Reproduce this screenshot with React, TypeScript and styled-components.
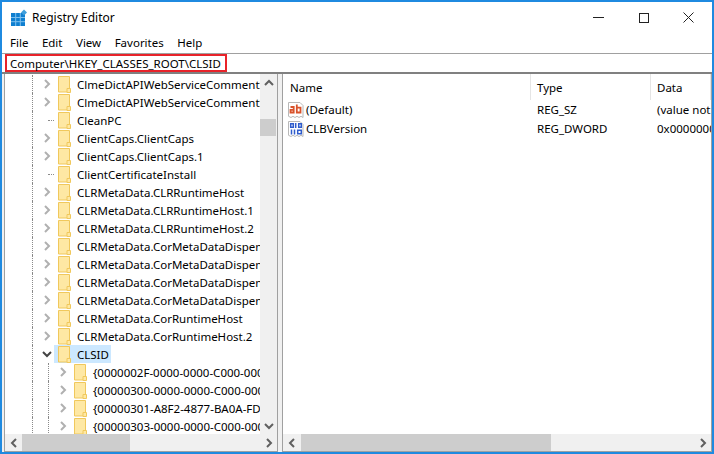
import styled, { createGlobalStyle } from "styled-components";

const GlobalStyle = createGlobalStyle`
	html, body {
		margin: 0;
		padding: 0;
		background: #fff;
	}
`

type TreeItem = { label: string; depth: number; toggle: "closed" | "open" | "none"; selected?: boolean }

const treeItems: TreeItem[] = [
	{ label: "ClmeDictAPIWebServiceCommentService", depth: 0, toggle: "closed" },
	{ label: "ClmeDictAPIWebServiceCommentService", depth: 0, toggle: "closed" },
	{ label: "CleanPC", depth: 0, toggle: "none" },
	{ label: "ClientCaps.ClientCaps", depth: 0, toggle: "closed" },
	{ label: "ClientCaps.ClientCaps.1", depth: 0, toggle: "closed" },
	{ label: "ClientCertificateInstall", depth: 0, toggle: "none" },
	{ label: "CLRMetaData.CLRRuntimeHost", depth: 0, toggle: "closed" },
	{ label: "CLRMetaData.CLRRuntimeHost.1", depth: 0, toggle: "closed" },
	{ label: "CLRMetaData.CLRRuntimeHost.2", depth: 0, toggle: "closed" },
	{ label: "CLRMetaData.CorMetaDataDispenser", depth: 0, toggle: "closed" },
	{ label: "CLRMetaData.CorMetaDataDispenser", depth: 0, toggle: "closed" },
	{ label: "CLRMetaData.CorMetaDataDispenser", depth: 0, toggle: "closed" },
	{ label: "CLRMetaData.CorMetaDataDispenser", depth: 0, toggle: "closed" },
	{ label: "CLRMetaData.CorRuntimeHost", depth: 0, toggle: "closed" },
	{ label: "CLRMetaData.CorRuntimeHost.2", depth: 0, toggle: "closed" },
	{ label: "CLSID", depth: 0, toggle: "open", selected: true },
	{ label: "{0000002F-0000-0000-C000-000000000046}", depth: 1, toggle: "closed" },
	{ label: "{00000300-0000-0000-C000-000000000046}", depth: 1, toggle: "closed" },
	{ label: "{00000301-A8F2-4877-BA0A-FD2B6645FB94}", depth: 1, toggle: "closed" },
	{ label: "{00000303-0000-0000-C000-000000000046}", depth: 1, toggle: "closed" },
]

const AppIcon = () => (
	<svg width="18" height="18" viewBox="0 0 18 18">
		<rect x="1" y="4" width="14" height="13" fill="#0f7fd0" />
		<path d="M1 8.5h14M1 12.7h14M5.7 4v13M10.3 4v13" stroke="#7fc0ee" strokeWidth="1" />
		<path d="M14 0.5l3 3-3 3-3-3z" fill="#3f9fdc" />
	</svg>
)

const Folder = () => (
	<svg width="13" height="17" viewBox="0 0 13 17">
		<path d="M0.5 0.5h11v15.5h-11z" fill="#fee8a4" stroke="#f0c85c" />
		<path d="M9 16.5v-4h3.5v4z" fill="#fee8a4" stroke="#f0c85c" />
	</svg>
)

const Chevron = ({ dir, color = "#b0b0b0" }: { dir: "left" | "right" | "up" | "down"; color?: string }) => {
	const points = {
		right: "3,1 7,5 3,9",
		left: "7,1 3,5 7,9",
		up: "1,7 5,3 9,7",
		down: "1,3 5,7 9,3",
	}[dir]
	return (
		<svg width="10" height="10" viewBox="0 0 10 10">
			<polyline points={points} fill="none" stroke={color} strokeWidth="2" />
		</svg>
	)
}

const Sheet = () => (
	<path d="M0.5 1.5h11.5l3 3v12l-2-1.2-2 1.2-2-1.2-2 1.2-2-1.2-2 1.2-2.5-1.2z" fill="#fff" stroke="#b8b8b8" />
)

const StringIcon = () => (
	<svg width="16" height="18" viewBox="0 0 16 18">
		<Sheet />
		<path d="M2.5 6h3.2v5.5H2.5V8.8h3.2M8.8 3.5v8h3.7V6.6H8.8" fill="none" stroke="#d9532c" strokeWidth="1.8" />
	</svg>
)

const BinaryIcon = () => (
	<svg width="16" height="18" viewBox="0 0 16 18">
		<Sheet />
		<path d="M2.7 3.7h2.6v3.6H2.7zM7.7 3v5M10.7 3.7h2.6v3.6h-2.6zM3.5 9.5v5M6.5 9.5v5M9.7 10.2h3.6v3.6H9.7z" fill="none" stroke="#2f5ccc" strokeWidth="1.5" />
	</svg>
)

const App = () => {
	return (
		<StyledWindow>
			<GlobalStyle />
			<StyledTitleBar>
				<AppIcon />
				<StyledTitle>Registry Editor</StyledTitle>
				<StyledControls>
					<StyledControl>
						<svg width="11" height="11" viewBox="0 0 11 11"><path d="M0 5.5h11" stroke="#222" /></svg>
					</StyledControl>
					<StyledControl>
						<svg width="11" height="11" viewBox="0 0 11 11"><rect x="1.5" y="1.5" width="9" height="9" fill="none" stroke="#222" /></svg>
					</StyledControl>
					<StyledControl>
						<svg width="11" height="11" viewBox="0 0 11 11"><path d="M0.5 0.5l10 10M10.5 0.5l-10 10" stroke="#222" /></svg>
					</StyledControl>
				</StyledControls>
			</StyledTitleBar>

			<StyledMenu>
				<span>File</span>
				<span>Edit</span>
				<span>View</span>
				<span>Favorites</span>
				<span>Help</span>
			</StyledMenu>

			<StyledAddressBar>
				<StyledAddress>Computer\HKEY_CLASSES_ROOT\CLSID</StyledAddress>
			</StyledAddressBar>

			<StyledPanes>
				<StyledTreePane>
					<StyledPaneBody>
						<StyledTree>
							{treeItems.map((item, i) => (
								<StyledRow key={i}>
									<StyledRail $wide={item.depth > 0} />
									{item.depth > 0 && <StyledRail />}
									<StyledToggle>
										{item.toggle === "closed" && <Chevron dir="right" />}
										{item.toggle === "open" && <Chevron dir="down" color="#444" />}
										{item.toggle === "none" && <StyledLeafDots />}
									</StyledToggle>
									<StyledNode $selected={item.selected}>
										<Folder />
										<StyledNodeLabel>{item.label}</StyledNodeLabel>
									</StyledNode>
								</StyledRow>
							))}
						</StyledTree>
						<StyledVScroll>
							<StyledArrow $vertical><Chevron dir="up" color="#606060" /></StyledArrow>
							<StyledVThumb />
							<StyledArrow $vertical><Chevron dir="down" color="#606060" /></StyledArrow>
						</StyledVScroll>
					</StyledPaneBody>
					<StyledHScroll>
						<StyledArrow><Chevron dir="left" color="#606060" /></StyledArrow>
						<StyledHTrack>
							<StyledHThumb $width={108} />
						</StyledHTrack>
						<StyledArrow><Chevron dir="right" color="#606060" /></StyledArrow>
					</StyledHScroll>
				</StyledTreePane>

				<StyledListPane>
					<StyledPaneBody>
						<StyledList>
							<StyledHeader>
								<StyledHeaderCell $width={248} $first>Name</StyledHeaderCell>
								<StyledHeaderCell $width={120}>Type</StyledHeaderCell>
								<StyledHeaderCell $width={60}>Data</StyledHeaderCell>
							</StyledHeader>
							<StyledListRow>
								<StyledNameCell><StringIcon />(Default)</StyledNameCell>
								<StyledTypeCell>REG_SZ</StyledTypeCell>
								<StyledDataCell>(value not set)</StyledDataCell>
							</StyledListRow>
							<StyledListRow>
								<StyledNameCell><BinaryIcon />CLBVersion</StyledNameCell>
								<StyledTypeCell>REG_DWORD</StyledTypeCell>
								<StyledDataCell>0x00000003 (3)</StyledDataCell>
							</StyledListRow>
						</StyledList>
					</StyledPaneBody>
					<StyledHScroll>
						<StyledArrow><Chevron dir="left" color="#606060" /></StyledArrow>
						<StyledHTrack>
							<StyledHThumb $width={250} $offset={1} />
						</StyledHTrack>
						<StyledArrow><Chevron dir="right" color="#606060" /></StyledArrow>
					</StyledHScroll>
				</StyledListPane>
			</StyledPanes>
		</StyledWindow>
	)
}

const StyledWindow = styled.div`
	box-sizing: border-box;
	width: 714px;
	height: 454px;
	display: flex;
	flex-direction: column;
	overflow: hidden;
	background: #fff;
	border: 2px solid #1f8ae0;
	color: #000;
	font-family: "Noto Sans", "Open Sans", sans-serif;
	font-size: 11.5px;
`

const StyledTitleBar = styled.div`
	height: 31px;
	display: flex;
	align-items: center;
	padding-left: 8px;
	flex-shrink: 0;
`

const StyledTitle = styled.div`
	margin-left: 4px;
	font-size: 12px;
`

const StyledControls = styled.div`
	margin-left: auto;
	display: flex;
	margin-right: 1px;
`

const StyledControl = styled.div`
	width: 45px;
	height: 30px;
	display: flex;
	align-items: center;
	justify-content: center;
`

const StyledMenu = styled.div`
	height: 20px;
	flex-shrink: 0;
	display: flex;
	align-items: center;
	gap: 13.5px;
	padding-left: 8px;
	padding-bottom: 2px;
	box-sizing: border-box;
	font-size: 11.5px;
`

const StyledAddressBar = styled.div`
	box-sizing: border-box;
	height: 21px;
	flex-shrink: 0;
	border-top: 1px solid #a0a0a0;
	border-bottom: 2px solid #808080;
	display: flex;
	align-items: stretch;
`

const StyledAddress = styled.div`
	box-sizing: border-box;
	width: 222px;
	margin-left: 3px;
	padding-left: 3px;
	border: 2px solid #e8232a;
	display: flex;
	align-items: center;
	font-size: 11.5px;
	white-space: nowrap;
`

const StyledPanes = styled.div`
	flex: 1;
	min-height: 0;
	display: flex;
	gap: 4px;
	padding-left: 2px;
	background: #f0f0f0;
`

const StyledTreePane = styled.div`
	flex: none;
	width: 272px;
	display: flex;
	flex-direction: column;
	background: #fff;
	border-left: 1px solid #a0a0a0;
	border-right: 1px solid #a0a0a0;
	border-bottom: 1px solid #a0a0a0;
`

const StyledListPane = styled.div`
	flex: 1;
	min-width: 0;
	display: flex;
	flex-direction: column;
	background: #fff;
	border-left: 1px solid #a0a0a0;
	border-right: 1px solid #a0a0a0;
	border-bottom: 1px solid #a0a0a0;
`

const StyledPaneBody = styled.div`
	flex: 1;
	min-height: 0;
	display: flex;
`

const StyledTree = styled.div`
	flex: 1;
	min-width: 0;
	overflow: hidden;
	padding-top: 1px;
`

const StyledRow = styled.div`
	height: 18px;
	display: flex;
	align-items: stretch;
	padding-left: 27px;
	white-space: nowrap;
`

const StyledRail = styled.span<{ $wide?: boolean }>`
	flex: none;
	box-sizing: border-box;
	width: ${(p) => (p.$wide ? 16 : 8)}px;
	border-left: 1px dotted #8a8a8a;
`

const StyledToggle = styled.span`
	flex: none;
	width: 14px;
	display: flex;
	align-items: center;
	justify-content: center;
`

const StyledLeafDots = styled.span`
	width: 8px;
	margin-left: 8px;
	border-top: 1px dotted #8a8a8a;
`

const StyledNode = styled.span<{ $selected?: boolean }>`
	display: flex;
	align-items: center;
	padding-left: 4px;
	background: ${(p) => (p.$selected ? "#cce8ff" : "transparent")};
`

const StyledNodeLabel = styled.span`
	margin-left: 6px;
	padding-right: 2px;
`

const StyledVScroll = styled.div`
	flex: none;
	width: 17px;
	display: flex;
	flex-direction: column;
	background: #f0f0f0;
`

const StyledArrow = styled.div<{ $vertical?: boolean }>`
	flex: none;
	width: ${(p) => (p.$vertical ? "100%" : "17px")};
	height: 17px;
	display: flex;
	align-items: center;
	justify-content: center;
`

const StyledVThumb = styled.div`
	height: 17px;
	margin-top: 28px;
	margin-bottom: auto;
	margin-right: 1px;
	background: #cdcdcd;
`

const StyledHScroll = styled.div`
	flex: none;
	height: 17px;
	display: flex;
	background: #f0f0f0;
`

const StyledHTrack = styled.div`
	flex: 1;
	min-width: 0;
`

const StyledHThumb = styled.div<{ $width: number; $offset?: number }>`
	width: ${(p) => p.$width}px;
	height: 100%;
	margin-left: ${(p) => p.$offset ?? 0}px;
	background: #cdcdcd;
`

const StyledList = styled.div`
	flex: 1;
	min-width: 0;
	overflow: hidden;
`

const StyledHeader = styled.div`
	height: 26px;
	display: flex;
`

const StyledHeaderCell = styled.div<{ $width: number; $first?: boolean }>`
	box-sizing: border-box;
	flex: none;
	width: ${(p) => p.$width}px;
	padding-left: ${(p) => (p.$first ? 7 : 6)}px;
	display: flex;
	align-items: center;
	border-right: 1px solid #e5e5e5;
`

const StyledListRow = styled.div`
	height: 19px;
	display: flex;
	align-items: center;
	white-space: nowrap;
`

const StyledNameCell = styled.div`
	flex: none;
	width: 248px;
	padding-left: 5px;
	box-sizing: border-box;
	display: flex;
	align-items: center;
	gap: 2px;
`

const StyledTypeCell = styled.div`
	flex: none;
	width: 120px;
	padding-left: 6px;
	box-sizing: border-box;
`

const StyledDataCell = styled.div`
	padding-left: 6px;
`

export default App;
